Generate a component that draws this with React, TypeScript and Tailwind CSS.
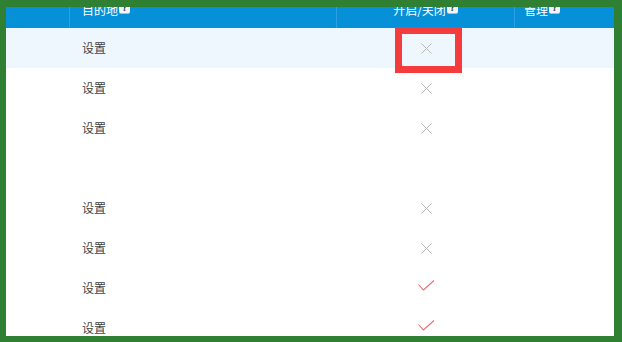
import React from "react";

type Row = { name: string; enabled: boolean | null };

const rows: Row[] = [
  { name: "设置", enabled: false },
  { name: "设置", enabled: false },
  { name: "设置", enabled: false },
  { name: "", enabled: null },
  { name: "设置", enabled: false },
  { name: "设置", enabled: false },
  { name: "设置", enabled: true },
  { name: "设置", enabled: true },
];

const font = { fontFamily: '"Noto Sans CJK SC", "Liberation Sans", sans-serif' };

function HelpBadge() {
  return (
    <span className="relative -top-[3px] ml-[1px] inline-flex h-[11px] w-[11px] items-center justify-center rounded-[2px] bg-[#f4f4f4] text-[9px] font-bold leading-none text-[#333] shadow-[0_1px_0_#bbb]">
      ?
    </span>
  );
}

function Cross() {
  return (
    <svg width="11" height="11" viewBox="0 0 11 11">
      <path d="M0.5 0.5L10.5 10.5M10.5 0.5L0.5 10.5" stroke="#b8b8b8" strokeWidth="1" fill="none" />
    </svg>
  );
}

function Check() {
  return (
    <svg width="17" height="11" viewBox="0 0 17 11">
      <path d="M0.5 4.5L5.5 10L16 0.5" stroke="#f06a6a" strokeWidth="1.1" fill="none" />
    </svg>
  );
}

export default function App() {
  return (
    <div className="h-[342px] w-[622px] bg-[#2f8033] pb-[6px] pl-[6px] pr-[8px] pt-[7px]" style={font}>
      <div className="relative h-full w-full overflow-hidden bg-white">
        {/* table header, partly scrolled out of view */}
        <div className="-mt-[15px] grid h-9 grid-cols-[64px_267px_178px_1fr] bg-[#0590d8] text-[12px] text-white">
          <div className="border-r border-[#2aa0e2]" />
          <div className="flex items-center border-r border-[#2aa0e2] pl-[12px]">
            目的地
            <HelpBadge />
          </div>
          <div className="flex items-center justify-center border-r border-[#2aa0e2]">
            开启/关闭
            <HelpBadge />
          </div>
          <div className="flex items-center pl-[9px]">
            管理
            <HelpBadge />
          </div>
        </div>

        {rows.map((r, i) => (
          <div
            key={i}
            className={`grid h-10 grid-cols-[64px_267px_178px_1fr] text-[12px] text-[#444] ${
              i === 0 ? "bg-[#eef7fe]" : "bg-white"
            }`}
          >
            <div />
            <div className="flex items-center pl-[12px]">{r.name}</div>
            <div className="flex items-center justify-center">
              {r.enabled === false && <Cross />}
              {r.enabled === true && (
                <span className="-mt-[5px]">
                  <Check />
                </span>
              )}
            </div>
            <div />
          </div>
        ))}

        {/* focus marker over the first toggle */}
        <div className="absolute left-[389px] top-[20px] h-[46px] w-[67px] border-[7px] border-[#f53c3c]" />
      </div>
    </div>
  );
}
